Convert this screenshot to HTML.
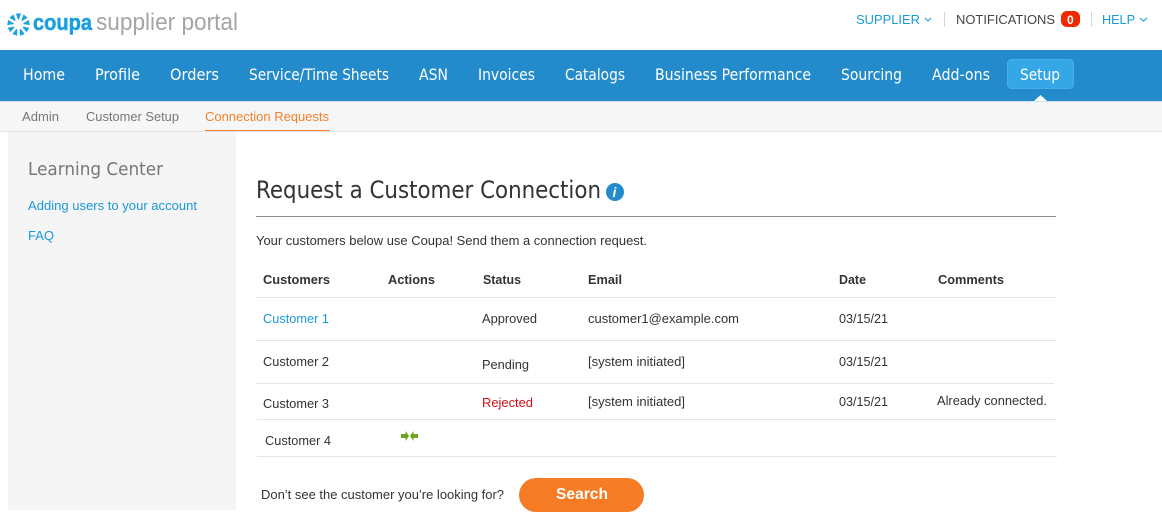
<!DOCTYPE html>
<html><head><meta charset="utf-8"><style>
html,body{margin:0;padding:0;background:#fff;width:1162px;height:514px;overflow:hidden}
svg{display:block}
text{font-family:"Liberation Sans",sans-serif;font-size:13px;fill:#333;white-space:pre}
.n{font-family:"DejaVu Sans",sans-serif;font-size:16px;fill:#fff}
.o{font-family:"DejaVu Sans",sans-serif}
.b{font-weight:bold;fill:#333}
.l{fill:#1a9ad7}
</style></head><body>
<svg width="1162" height="514" viewBox="0 0 1162 514" xmlns="http://www.w3.org/2000/svg">
<rect width="1162" height="514" fill="#fff"/>
<!-- logo -->
<g transform="translate(18.5 24.5)" fill="#1ba1e2">
<path d="M-.5-5L-2.600-11L2.600-11L.5-5z"/>
<path transform="rotate(40)" d="M-.5-5L-2.600-11L2.600-11L.5-5z"/>
<path transform="rotate(80)" d="M-.5-5L-2.600-11L2.600-11L.5-5z"/>
<path transform="rotate(120)" d="M-.5-5L-2.600-11L2.600-11L.5-5z"/>
<path transform="rotate(160)" d="M-.5-5L-2.600-11L2.600-11L.5-5z"/>
<path transform="rotate(200)" d="M-.5-5L-2.600-11L2.600-11L.5-5z"/>
<path transform="rotate(240)" d="M-.5-5L-2.600-11L2.600-11L.5-5z"/>
<path transform="rotate(280)" d="M-.5-5L-2.600-11L2.600-11L.5-5z"/>
<path transform="rotate(320)" d="M-.5-5L-2.600-11L2.600-11L.5-5z"/>
</g>
<text x="33" y="30" textLength="59" lengthAdjust="spacingAndGlyphs" style="font-size:22px;font-weight:bold;fill:#1a9fdf;stroke:#1a9fdf;stroke-width:.5">coupa</text>
<text x="96" y="30" textLength="142" lengthAdjust="spacingAndGlyphs" style="font-size:24px;fill:#a3a5a7">supplier portal</text>
<!-- top right -->
<text x="856" y="24" textLength="64" lengthAdjust="spacingAndGlyphs" class="l">SUPPLIER</text>
<path d="M925 18l3 3 3-3" fill="none" stroke="#1a9ad7" stroke-width="1.1"/>
<rect x="944" y="12" width="1" height="15" fill="#c9d9e3"/>
<text x="956" y="24" textLength="99" lengthAdjust="spacingAndGlyphs" style="fill:#444">NOTIFICATIONS</text>
<rect x="1061" y="11" width="19" height="16" rx="6" fill="#f02a00"/>
<text x="1067" y="24" style="font-size:12px;font-weight:bold;fill:#fff">0</text>
<rect x="1091" y="12" width="1" height="15" fill="#c9d9e3"/>
<text x="1102" y="24" textLength="33" lengthAdjust="spacingAndGlyphs" class="l">HELP</text>
<path d="M1140 18l3.500 3 3.500-3" fill="none" stroke="#1a9ad7" stroke-width="1.1"/>
<!-- nav -->
<rect y="50" width="1162" height="51" fill="#238bcc"/>
<rect y="101" width="1162" height="1" fill="#cfe0ea"/>
<rect x="1007.500" y="59.500" width="66" height="29" rx="4" fill="#35a7e6" stroke="#4aaee4"/>
<path d="M1034 101l6.500-6 6.500 6z" fill="#fff"/>
<text class="n" x="23" y="80" textLength="42" lengthAdjust="spacingAndGlyphs">Home</text>
<text class="n" x="95" y="80" textLength="45" lengthAdjust="spacingAndGlyphs">Profile</text>
<text class="n" x="170" y="80" textLength="49" lengthAdjust="spacingAndGlyphs">Orders</text>
<text class="n" x="249" y="80" textLength="140" lengthAdjust="spacingAndGlyphs">Service/Time Sheets</text>
<text class="n" x="419" y="80" textLength="29" lengthAdjust="spacingAndGlyphs">ASN</text>
<text class="n" x="478" y="80" textLength="57" lengthAdjust="spacingAndGlyphs">Invoices</text>
<text class="n" x="565" y="80" textLength="60" lengthAdjust="spacingAndGlyphs">Catalogs</text>
<text class="n" x="655" y="80" textLength="156" lengthAdjust="spacingAndGlyphs">Business Performance</text>
<text class="n" x="841" y="80" textLength="61" lengthAdjust="spacingAndGlyphs">Sourcing</text>
<text class="n" x="932" y="80" textLength="58" lengthAdjust="spacingAndGlyphs">Add-ons</text>
<text class="n" x="1020" y="80" textLength="40" lengthAdjust="spacingAndGlyphs">Setup</text>
<!-- subnav -->
<rect y="102" width="1162" height="29" fill="#f6f6f6"/>
<rect y="131" width="1162" height="1" fill="#e4e4e4"/>
<text x="22" y="121" textLength="37" lengthAdjust="spacingAndGlyphs" style="fill:#777">Admin</text>
<text x="86" y="121" textLength="93" lengthAdjust="spacingAndGlyphs" style="fill:#777">Customer Setup</text>
<text x="205" y="121" textLength="124" lengthAdjust="spacingAndGlyphs" style="fill:#f5802a">Connection Requests</text>
<rect x="205" y="130" width="125" height="1" fill="#f5802a"/>
<!-- sidebar -->
<rect x="8" y="132" width="228" height="378" fill="#f5f5f5"/>
<text class="o" x="28" y="175" textLength="135" lengthAdjust="spacingAndGlyphs" style="font-size:18px;fill:#777">Learning Center</text>
<text x="28" y="210" textLength="169" lengthAdjust="spacingAndGlyphs" class="l">Adding users to your account</text>
<text x="28" y="240" textLength="26" lengthAdjust="spacingAndGlyphs" class="l">FAQ</text>
<!-- heading -->
<text class="o" x="256" y="198" textLength="345" lengthAdjust="spacingAndGlyphs" style="font-size:24px;fill:#333">Request a Customer Connection</text>
<circle cx="615" cy="192" r="9" fill="#238bcc"/>
<text x="612.500" y="197" style="font-size:14px;font-weight:bold;font-style:italic;fill:#fff">i</text>
<rect x="256" y="216" width="800" height="1" fill="#8c8c8c"/>
<text x="256" y="245" textLength="391" lengthAdjust="spacingAndGlyphs">Your customers below use Coupa! Send them a connection request.</text>
<!-- table -->
<text class="b" x="263" y="284" textLength="67" lengthAdjust="spacingAndGlyphs">Customers</text>
<text class="b" x="388" y="284" textLength="47" lengthAdjust="spacingAndGlyphs">Actions</text>
<text class="b" x="483" y="284" textLength="38" lengthAdjust="spacingAndGlyphs">Status</text>
<text class="b" x="588" y="284" textLength="34" lengthAdjust="spacingAndGlyphs">Email</text>
<text class="b" x="839" y="284" textLength="27" lengthAdjust="spacingAndGlyphs">Date</text>
<text class="b" x="938" y="284" textLength="66" lengthAdjust="spacingAndGlyphs">Comments</text>
<rect x="256" y="297" width="800" height="1" fill="#e6e6e6"/>
<rect x="256" y="340" width="800" height="1" fill="#e6e6e6"/>
<rect x="256" y="383" width="798" height="1" fill="#e6e6e6"/>
<rect x="257" y="419" width="800" height="1" fill="#e6e6e6"/>
<rect x="257" y="456" width="800" height="1" fill="#e6e6e6"/>
<text class="l" x="263" y="323" textLength="66" lengthAdjust="spacingAndGlyphs">Customer 1</text>
<text x="482" y="323" textLength="55" lengthAdjust="spacingAndGlyphs">Approved</text>
<text x="588" y="323" textLength="151" lengthAdjust="spacingAndGlyphs">customer1@example.com</text>
<text x="839" y="323" textLength="49" lengthAdjust="spacingAndGlyphs">03/15/21</text>
<text x="263" y="366" textLength="66" lengthAdjust="spacingAndGlyphs">Customer 2</text>
<text x="482" y="369" textLength="47" lengthAdjust="spacingAndGlyphs">Pending</text>
<text x="588" y="366" textLength="97" lengthAdjust="spacingAndGlyphs">[system initiated]</text>
<text x="839" y="366" textLength="49" lengthAdjust="spacingAndGlyphs">03/15/21</text>
<text x="263" y="408" textLength="66" lengthAdjust="spacingAndGlyphs">Customer 3</text>
<text x="482" y="407" textLength="51" lengthAdjust="spacingAndGlyphs" style="fill:#d0121b">Rejected</text>
<text x="588" y="406" textLength="97" lengthAdjust="spacingAndGlyphs">[system initiated]</text>
<text x="839" y="406" textLength="49" lengthAdjust="spacingAndGlyphs">03/15/21</text>
<text x="937" y="405" textLength="110" lengthAdjust="spacingAndGlyphs">Already connected.</text>
<text x="265" y="445" textLength="66" lengthAdjust="spacingAndGlyphs">Customer 4</text>
<path d="M401 434h4.500v-3l3.500 5-3.500 5v-3h-4.500zM418 434h-4.500v-3l-3.500 5 3.500 5v-3h4.500z" fill="#6ea31c"/>
<!-- footer -->
<text x="261" y="499" textLength="243" lengthAdjust="spacingAndGlyphs">Don’t see the customer you’re looking for?</text>
<rect x="519" y="478" width="125" height="34" rx="17" fill="#f57b24"/>
<text x="556" y="499" textLength="52" lengthAdjust="spacingAndGlyphs" style="font-size:16px;font-weight:bold;fill:#fff">Search</text>
</svg>
</body></html>
